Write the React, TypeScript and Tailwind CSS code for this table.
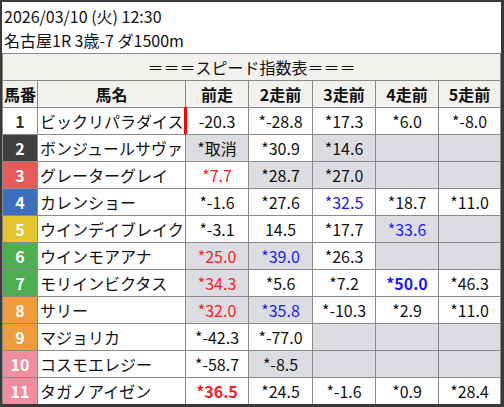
import React from 'react';

type Cell = { v: string; gray?: boolean; color?: 'red' | 'blue'; bold?: boolean };

type Horse = { no: number; name: string; bg: string; fg: string; cells: Cell[] };

const E: Cell = { v: '', gray: true };

const horses: Horse[] = [
  {
    no: 1,
    name: 'ビックリパラダイス',
    bg: 'bg-white',
    fg: 'text-[#333333]',
    cells: [{ v: '-20.3' }, { v: '*-28.8' }, { v: '*17.3' }, { v: '*6.0' }, { v: '*-8.0' }],
  },
  {
    no: 2,
    name: 'ボンジュールサヴァ',
    bg: 'bg-[#3f3f3f]',
    fg: 'text-white',
    cells: [{ v: '*取消', gray: true }, { v: '*30.9' }, { v: '*14.6', gray: true }, E, E],
  },
  {
    no: 3,
    name: 'グレーターグレイ',
    bg: 'bg-[#e85a5a]',
    fg: 'text-white',
    cells: [{ v: '*7.7', color: 'red' }, { v: '*28.7', gray: true }, { v: '*27.0', gray: true }, E, E],
  },
  {
    no: 4,
    name: 'カレンショー',
    bg: 'bg-[#3d6fbf]',
    fg: 'text-white',
    cells: [{ v: '*-1.6' }, { v: '*27.6' }, { v: '*32.5', color: 'blue' }, { v: '*18.7' }, { v: '*11.0' }],
  },
  {
    no: 5,
    name: 'ウインデイブレイク',
    bg: 'bg-[#e6c42e]',
    fg: 'text-white',
    cells: [{ v: '*-3.1' }, { v: '14.5' }, { v: '*17.7' }, { v: '*33.6', color: 'blue', gray: true }, E],
  },
  {
    no: 6,
    name: 'ウインモアアナ',
    bg: 'bg-[#4cae4f]',
    fg: 'text-white',
    cells: [
      { v: '*25.0', color: 'red', gray: true },
      { v: '*39.0', color: 'blue', gray: true },
      { v: '*26.3' },
      E,
      E,
    ],
  },
  {
    no: 7,
    name: 'モリインビクタス',
    bg: 'bg-[#4cae4f]',
    fg: 'text-white',
    cells: [
      { v: '*34.3', color: 'red', gray: true },
      { v: '*5.6' },
      { v: '*7.2' },
      { v: '*50.0', color: 'blue', bold: true },
      { v: '*46.3' },
    ],
  },
  {
    no: 8,
    name: 'サリー',
    bg: 'bg-[#f09c3c]',
    fg: 'text-white',
    cells: [
      { v: '*32.0', color: 'red', gray: true },
      { v: '*35.8', color: 'blue', gray: true },
      { v: '*-10.3' },
      { v: '*2.9' },
      { v: '*11.0' },
    ],
  },
  {
    no: 9,
    name: 'マジョリカ',
    bg: 'bg-[#f09c3c]',
    fg: 'text-white',
    cells: [{ v: '*-42.3' }, { v: '*-77.0' }, E, E, E],
  },
  {
    no: 10,
    name: 'コスモエレジー',
    bg: 'bg-[#f08ea0]',
    fg: 'text-white',
    cells: [{ v: '*-58.7' }, { v: '*-8.5', gray: true }, E, E, E],
  },
  {
    no: 11,
    name: 'タガノアイゼン',
    bg: 'bg-[#f08ea0]',
    fg: 'text-white',
    cells: [{ v: '*36.5', color: 'red', bold: true }, { v: '*24.5' }, { v: '*-1.6' }, { v: '*0.9' }, { v: '*28.4' }],
  },
];

const heads = ['前走', '2走前', '3走前', '4走前', '5走前'];

function ValueCell({ cell }: { cell: Cell }) {
  const color = cell.color === 'red' ? 'text-[#ff1a1a]' : cell.color === 'blue' ? 'text-[#1a1aff]' : 'text-[#111111]';
  return (
    <div
      className={`flex h-[26px] items-center justify-center ${cell.gray ? 'bg-[#dcdde2]' : 'bg-white'} ${color} ${
        cell.bold ? 'font-bold' : ''
      }`}
    >
      {cell.v}
    </div>
  );
}

export default function App() {
  return (
    <div
      className="h-[407px] w-[504px] overflow-hidden border-t-2 border-r-[3px] border-b-[3px] border-l-2 border-[#3a3a3a] bg-white text-[16px] text-[#111111]"
      style={{ fontFamily: '"Noto Sans CJK JP", "Noto Sans", sans-serif' }}
    >
      <div className="flex h-[51px] flex-col pt-[2px] pl-[2px] leading-[24px]">
        <div>2026/03/10 (火) 12:30</div>
        <div>名古屋1R 3歳-7 ダ1500m</div>
      </div>

      <div className="grid grid-cols-[34px_147px_62px_63px_62px_62px_61px] gap-px border border-[#8a8a8a] bg-[#8a8a8a] leading-none">
        <div className="col-span-7 flex h-[26px] items-center justify-center bg-[#f2f1ee]">
          ＝＝＝スピード指数表＝＝＝
        </div>

        <div className="flex h-[26px] items-center justify-center bg-[#f2f1ee] font-bold">馬番</div>
        <div className="flex h-[26px] items-center justify-center bg-[#f2f1ee] font-bold">馬名</div>
        {heads.map((h) => (
          <div key={h} className="flex h-[26px] items-center justify-center bg-[#f2f1ee] font-bold">
            {h}
          </div>
        ))}

        {horses.map((h) => (
          <React.Fragment key={h.no}>
            <div className={`flex h-[26px] items-center justify-center font-bold ${h.bg} ${h.fg}`}>{h.no}</div>
            <div className="relative flex h-[26px] items-center bg-white pl-[2px] whitespace-nowrap">
              {h.name}
              {h.no === 1 && <span className="absolute -top-px right-[-2px] bottom-0 w-[3px] bg-[#ff0000]" />}
            </div>
            {h.cells.map((c, i) => (
              <ValueCell key={i} cell={c} />
            ))}
          </React.Fragment>
        ))}
      </div>
    </div>
  );
}
